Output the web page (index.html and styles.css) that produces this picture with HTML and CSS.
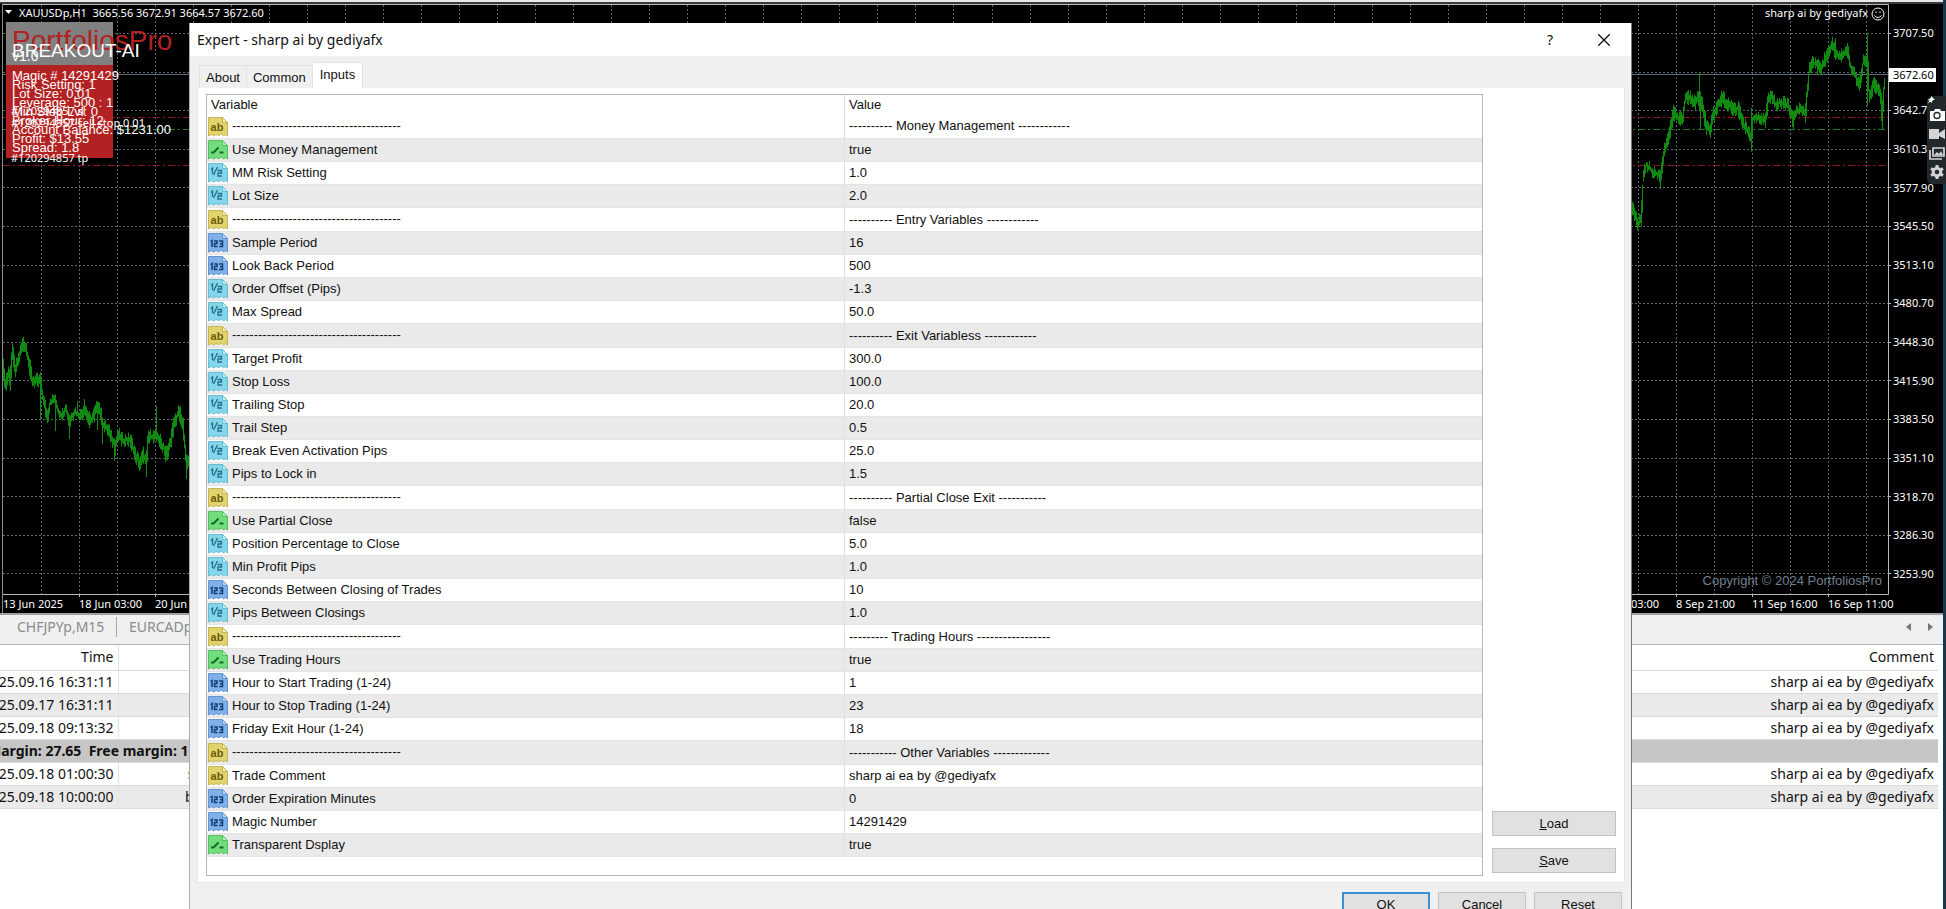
FILE: index.html
```
<!DOCTYPE html>
<html lang="en">

<head>
  <meta charset="UTF-8">
  <meta name="viewport" content="width=device-width, initial-scale=1.0">
  <title>XAUUSDp,H1</title>
  <link rel="stylesheet" href="styles.css">
</head>

<body>
  <!-- parameter type icons -->
  <svg class="defs" width="0" height="0" aria-hidden="true">
    <symbol id="str" viewBox="0 0 20 20">
      <path d="M0.500 0.500h14l5 5v13.500l-2-1.500-2 1.500-2-2-2.500 1.500-3-1-2.500 1.500-2-1.500-3 1.500z" fill="#e3d36c" stroke="#c4b557" />
      <path d="M14.500 0.500v5h5z" fill="#f6eeb0" stroke="#c4b557" />
      <text x="9" y="14" class="ico" fill="#6b5b0c" font-size="11">ab</text>
    </symbol>
    <symbol id="bool" viewBox="0 0 20 20">
      <path d="M0.500 0.500h14l5 5v13.500l-2-1.500-2 1.500-2-2-2.500 1.500-3-1-2.500 1.500-2-1.500-3 1.500z" fill="#72dd7c" stroke="#52bd63" />
      <path d="M14.500 0.500v5h5z" fill="#b9f3bd" stroke="#52bd63" />
      <path d="M3 12.500h2.500l5-5M11.500 12.500h4" fill="none" stroke="#14692c" stroke-width="2" />
    </symbol>
    <symbol id="dbl" viewBox="0 0 20 20">
      <path d="M0.500 0.500h14l5 5v13.500l-2-1.500-2 1.500-2-2-2.500 1.500-3-1-2.500 1.500-2-1.500-3 1.500z" fill="#84d7ea" stroke="#66bdd2" />
      <path d="M14.500 0.500v5h5z" fill="#c4f0f8" stroke="#66bdd2" />
      <path d="M3 6.500l1.500-1.500v6M9.500 4l-4 8M9.500 7.500h4v2.500l-3.500 0v3h4" fill="none" stroke="#226f8d" stroke-width="1.300" />
    </symbol>
    <symbol id="int" viewBox="0 0 20 20">
      <path d="M0.500 0.500h14l5 5v13.500l-2-1.500-2 1.500-2-2-2.500 1.500-3-1-2.500 1.500-2-1.500-3 1.500z" fill="#7fb0ea" stroke="#6594d2" />
      <path d="M14.500 0.500v5h5z" fill="#bcd9fa" stroke="#6594d2" />
      <path d="M2.500 8.500l1.500-1v6.500M6 8h3v2.500h-2.500v3h3M11 8h3.500v5.500h-3.500M12 10.700h2.500" fill="none" stroke="#123f78" stroke-width="1.500" />
    </symbol>
  </svg>

  <main class="terminal">
    <section class="chart">
      <svg id="plot" viewBox="0 0 1943 613" preserveAspectRatio="none" aria-hidden="true"></svg>

      <header class="chart-head">
        <span><svg class="caret" viewBox="0 0 7 4"><path d="M0 0h7l-3.500 4z" fill="#fff" /></svg>XAUUSDp,H1&nbsp; 3665.56 3672.91 3664.57 3672.60</span>
        <span>sharp ai by gediyafx
          <svg class="smile" viewBox="0 0 14 14" fill="none" stroke="#fff">
            <circle cx="7" cy="7" r="6" />
            <path d="M3.500 8.500q3.500 4 7 0M5 4.500v1.500M9 4.500v1.500" />
          </svg></span>
      </header>

      <div class="panel">
        <div class="panel-top"></div>
        <div class="panel-body"></div>
        <p class="brand">PortfoliosPro</p>
        <p class="product">BREAKOUT-AI</p>
        <p class="version">v1.0</p>
        <ul class="stats">
          <li>Magic # 14291429</li>
          <li>Risk Setting: 1</li>
          <li>Lot Size: 0.01</li>
          <li>Leverage: 500 : 1</li>
          <li>Min Stop Lvl: 0</li>
          <li>Broker Hour: 12</li>
          <li>Account Balance: $1231.00</li>
          <li>Profit: $13.55</li>
          <li>Spread: 1.8</li>
        </ul>
        <p class="order order-sl">#120294857 sl</p>
        <p class="order order-open">#120294857 sell stop 0.01</p>
        <p class="order order-tp">#120294857 tp</p>
      </div>

      <p class="copyright">Copyright © 2024 PortfoliosPro</p>

      <ul class="prices">
        <li>3707.50</li>
        <li></li>
        <li>3642.70</li>
        <li>3610.30</li>
        <li>3577.90</li>
        <li>3545.50</li>
        <li>3513.10</li>
        <li>3480.70</li>
        <li>3448.30</li>
        <li>3415.90</li>
        <li>3383.50</li>
        <li>3351.10</li>
        <li>3318.70</li>
        <li>3286.30</li>
        <li>3253.90</li>
      </ul>
      <span class="bid">3672.60</span>

      <div class="dates">
        <div><span>13 Jun 2025</span><span>18 Jun 03:00</span><span>20 Jun 08:00</span></div>
        <div><span>4 Sep 03:00</span><span>8 Sep 21:00</span><span>11 Sep 16:00</span><span>16 Sep 11:00</span></div>
      </div>
    </section>

    <nav class="chart-tabs">
      <a href="#">CHFJPYp,M15</a>
      <a href="#">EURCADp,M15</a>
      <span class="arrows">
        <button aria-label="Previous"><svg viewBox="0 0 5 8"><path d="M5 0v8l-5-4z" fill="#777" /></svg></button>
        <button aria-label="Next"><svg viewBox="0 0 5 8"><path d="M0 0v8l5-4z" fill="#777" /></svg></button>
      </span>
    </nav>

    <div class="trades-wrap">
      <table class="trades">
        <thead>
          <tr><th class="time">Time</th><th class="type"></th><th>Comment</th></tr>
        </thead>
        <tbody>
          <tr><td class="time">2025.09.16 16:31:11</td><td></td><td>sharp ai ea by @gediyafx</td></tr>
          <tr><td class="time">2025.09.17 16:31:11</td><td></td><td>sharp ai ea by @gediyafx</td></tr>
          <tr><td class="time">2025.09.18 09:13:32</td><td></td><td>sharp ai ea by @gediyafx</td></tr>
          <tr class="balance"><td colspan="3">Margin: 27.65&nbsp; Free margin: 1</td></tr>
          <tr><td class="time">2025.09.18 01:00:30</td><td>sell stop</td><td>sharp ai ea by @gediyafx</td></tr>
          <tr><td class="time">2025.09.18 10:00:00</td><td>buy stop</td><td>sharp ai ea by @gediyafx</td></tr>
        </tbody>
      </table>
    </div>
  </main>

  <aside class="recorder">
    <svg class="pin" viewBox="0 0 10 10"><path d="M5 0l5 5-2 0-2 2v2l-2-2-4 3 3-4-2-2h2l2-2z" fill="#fff" /></svg>
    <button aria-label="Screenshot"><svg viewBox="0 0 16 14"><path d="M1 3h4l1-2h5l1 2h4v10h-15z" fill="#fff" /><circle cx="8" cy="7.500" r="3" fill="none" stroke="#22272c" stroke-width="1.300" /></svg></button>
    <button aria-label="Record"><svg viewBox="0 0 16 14"><path d="M0 2h10v4l6-4v10l-6-3v3h-10z" fill="#d4d4d4" /></svg></button>
    <button aria-label="Gallery"><svg viewBox="0 0 16 14"><path d="M4 2h11v8h-11zM1 4v9h12" fill="none" stroke="#d4d4d4" stroke-width="1.700" /><path d="M5 9l3-3 2 2 2-3 2 4z" fill="#d4d4d4" /></svg></button>
    <button aria-label="Settings"><svg viewBox="0 0 16 14"><circle cx="8" cy="7" r="3.800" fill="none" stroke="#d4d4d4" stroke-width="3" /><path d="M8 0v3M8 11v3M2 3.500l2.500 1.500M11.500 9l2.500 1.500M2 10.500l2.500-1.500M11.500 5l2.500-1.500" stroke="#d4d4d4" stroke-width="3" /></svg></button>
  </aside>

  <div class="dialog" role="dialog" aria-labelledby="dialogTitle">
    <div class="titlebar">
      <span id="dialogTitle">Expert - sharp ai by gediyafx</span>
      <button class="help" aria-label="Help">?</button>
      <button class="close" aria-label="Close"><svg viewBox="0 0 12 12"><path d="M0 0l12 12M12 0l-12 12" stroke="#111" stroke-width="1.300" /></svg></button>
    </div>

    <div class="tabs">
      <button>About</button>
      <button>Common</button>
      <button class="active">Inputs</button>
    </div>

    <div class="page">
      <div class="list">
        <table class="inputs">
          <thead>
            <tr><th>Variable</th><th>Value</th></tr>
          </thead>
          <tbody>
            <tr class="section"><td><svg><use href="#str" /></svg>---------------------------------------</td><td>---------- Money Management ------------</td></tr>
            <tr><td><svg><use href="#bool" /></svg>Use Money Management</td><td>true</td></tr>
            <tr><td><svg><use href="#dbl" /></svg>MM Risk Setting</td><td>1.0</td></tr>
            <tr><td><svg><use href="#dbl" /></svg>Lot Size</td><td>2.0</td></tr>
            <tr class="section"><td><svg><use href="#str" /></svg>---------------------------------------</td><td>---------- Entry Variables ------------</td></tr>
            <tr><td><svg><use href="#int" /></svg>Sample Period</td><td>16</td></tr>
            <tr><td><svg><use href="#int" /></svg>Look Back Period</td><td>500</td></tr>
            <tr><td><svg><use href="#dbl" /></svg>Order Offset (Pips)</td><td>-1.3</td></tr>
            <tr><td><svg><use href="#dbl" /></svg>Max Spread</td><td>50.0</td></tr>
            <tr class="section"><td><svg><use href="#str" /></svg>---------------------------------------</td><td>---------- Exit Variabless ------------</td></tr>
            <tr><td><svg><use href="#dbl" /></svg>Target Profit</td><td>300.0</td></tr>
            <tr><td><svg><use href="#dbl" /></svg>Stop Loss</td><td>100.0</td></tr>
            <tr><td><svg><use href="#dbl" /></svg>Trailing Stop</td><td>20.0</td></tr>
            <tr><td><svg><use href="#dbl" /></svg>Trail Step</td><td>0.5</td></tr>
            <tr><td><svg><use href="#dbl" /></svg>Break Even Activation Pips</td><td>25.0</td></tr>
            <tr><td><svg><use href="#dbl" /></svg>Pips to Lock in</td><td>1.5</td></tr>
            <tr class="section"><td><svg><use href="#str" /></svg>---------------------------------------</td><td>---------- Partial Close Exit -----------</td></tr>
            <tr><td><svg><use href="#bool" /></svg>Use Partial Close</td><td>false</td></tr>
            <tr><td><svg><use href="#dbl" /></svg>Position Percentage to Close</td><td>5.0</td></tr>
            <tr><td><svg><use href="#dbl" /></svg>Min Profit Pips</td><td>1.0</td></tr>
            <tr><td><svg><use href="#int" /></svg>Seconds Between Closing of Trades</td><td>10</td></tr>
            <tr><td><svg><use href="#dbl" /></svg>Pips Between Closings</td><td>1.0</td></tr>
            <tr class="section"><td><svg><use href="#str" /></svg>---------------------------------------</td><td>--------- Trading Hours -----------------</td></tr>
            <tr><td><svg><use href="#bool" /></svg>Use Trading Hours</td><td>true</td></tr>
            <tr><td><svg><use href="#int" /></svg>Hour to Start Trading (1-24)</td><td>1</td></tr>
            <tr><td><svg><use href="#int" /></svg>Hour to Stop Trading (1-24)</td><td>23</td></tr>
            <tr><td><svg><use href="#int" /></svg>Friday Exit Hour (1-24)</td><td>18</td></tr>
            <tr class="section"><td><svg><use href="#str" /></svg>---------------------------------------</td><td>----------- Other Variables -------------</td></tr>
            <tr><td><svg><use href="#str" /></svg>Trade Comment</td><td>sharp ai ea by @gediyafx</td></tr>
            <tr><td><svg><use href="#int" /></svg>Order Expiration Minutes</td><td>0</td></tr>
            <tr><td><svg><use href="#int" /></svg>Magic Number</td><td>14291429</td></tr>
            <tr><td><svg><use href="#bool" /></svg>Transparent Dsplay</td><td>true</td></tr>
          </tbody>
        </table>
      </div>
      <div class="side">
        <button class="btn"><u>L</u>oad</button>
        <button class="btn"><u>S</u>ave</button>
      </div>
    </div>

    <div class="actions">
      <button class="btn default">OK</button>
      <button class="btn">Cancel</button>
      <button class="btn">Reset</button>
    </div>
  </div>

  <script src="chart.js"></script>
</body>

</html>
```

FILE: styles.css
```
* {
  box-sizing: border-box;
}

body {
  margin: 0;
  height: 100vh;
  overflow: hidden;
  position: relative;
  background-color: #fff;
  font-family: "Liberation Sans", Arial, sans-serif;
  font-size: 13px;
  color: #111;
}

p,
ul {
  margin: 0;
  padding: 0;
  list-style: none;
}

button {
  font: inherit;
  color: inherit;
  cursor: pointer;
}

.defs {
  position: absolute;
}

.ico {
  font-family: "Liberation Sans", Arial, sans-serif;
  font-weight: bold;
  text-anchor: middle;
}

/* main window */

.terminal {
  height: 100%;
  border-right: 3px solid #17384f;
}

.chart {
  position: relative;
  height: 615px;
  border-top: 2px solid #e8e8e8;
  border-bottom: 2px solid #a0a0a0;
  background-color: #000;
  color: #fff;
  font-family: "Noto Sans", Tahoma, sans-serif;
  font-size: 11px;
  line-height: 16px;
}

#plot {
  position: absolute;
  top: -2px;
  left: 0;
  width: 100%;
  height: 613px;
}

.chart-head {
  position: relative;
  display: flex;
  justify-content: space-between;
  padding: 3px 58px 0 5px;
}

.caret {
  width: 7px;
  height: 4px;
  margin-right: 7px;
  vertical-align: 3px;
}

.smile {
  width: 14px;
  height: 14px;
  vertical-align: -4px;
}

/* the expert's own labels, stacked over one another */

.panel {
  position: absolute;
  top: 20px;
  left: 6px;
  width: 107px;
  font-family: "Liberation Sans", Arial, sans-serif;
  white-space: nowrap;
}

.panel-top {
  height: 43px;
  background-color: #808080;
}

.panel-body {
  height: 93px;
  background-color: #b22222;
}

.brand,
.product,
.version,
.stats,
.order {
  position: absolute;
  left: 6px;
}

.brand {
  top: 3px;
  font-size: 28px;
  line-height: 32px;
  color: #b22222;
}

.product {
  top: 18px;
  font-size: 19px;
  line-height: 22px;
}

.version {
  top: 26px;
  font-size: 14px;
}

.stats {
  top: 49px;
  font-size: 13px;
  line-height: 9px;
}

.order {
  left: 5px;
  font-family: "Noto Sans", Tahoma, sans-serif;
  font-size: 11px;
}

.order-sl {
  top: 81px;
}

.order-open {
  top: 93px;
}

.order-tp {
  top: 128px;
}

.copyright {
  position: absolute;
  right: 61px;
  bottom: 24px;
  font-family: "Liberation Sans", Arial, sans-serif;
  font-size: 13px;
  color: #708090;
}

.prices {
  position: absolute;
  top: 23px;
  right: 0;
  bottom: 31px;
  width: 50px;
  display: flex;
  flex-direction: column;
  justify-content: space-between;
}

.prices li {
  height: 16px;
}

.bid {
  position: absolute;
  top: 66px;
  right: 7px;
  width: 47px;
  height: 14px;
  padding-left: 4px;
  line-height: 14px;
  background-color: #fff;
  color: #000;
}

.dates {
  position: absolute;
  left: 3px;
  right: 39px;
  bottom: 1px;
  display: flex;
  justify-content: space-between;
}

.dates div {
  display: flex;
}

.dates span {
  width: 76px;
  white-space: nowrap;
}

.chart-tabs {
  display: flex;
  align-items: center;
  height: 30px;
  padding-bottom: 5px;
  border-bottom: 1px solid #b4b4b4;
  background-color: #f0f0f0;
  font-family: "Noto Sans", "Segoe UI", sans-serif;
  font-size: 14px;
}

.chart-tabs a {
  width: 117px;
  padding-left: 17px;
  border-right: 1px solid #a8a8a8;
  line-height: 20px;
  color: #8a8a8a;
  text-decoration: none;
}

.chart-tabs a + a {
  padding-left: 12px;
  border: none;
}

.arrows {
  display: flex;
  gap: 17px;
  margin-left: auto;
  padding-right: 10px;
}

.arrows button {
  display: flex;
  padding: 0;
  border: none;
  background: none;
}

.arrows svg {
  width: 5px;
  height: 8px;
}

.trades-wrap {
  margin-right: 5px;
  overflow: hidden;
}

/* list is scrolled sideways by a few pixels */
.trades {
  width: calc(100% + 24px);
  margin-left: -24px;
  table-layout: fixed;
  border-collapse: collapse;
  font-family: "Noto Sans", "Segoe UI", sans-serif;
  font-size: 14px;
  white-space: nowrap;
}

.trades th,
.trades td {
  height: 23px;
  padding: 0 4px;
  border-bottom: 1px solid #d9d9d9;
  font-weight: normal;
  line-height: 22px;
  text-align: right;
}

.trades th {
  height: 25px;
}

.trades .time {
  width: 142px;
  border-right: 1px solid #e2e2e2;
}

.trades .type {
  width: 128px;
}

.trades tbody tr:nth-child(even) {
  background-color: #eaeaea;
}

.trades .balance td {
  padding: 0 12px;
  background-color: #c6c6c6;
  font-weight: bold;
  text-align: left;
}

/* screen recorder widget */

.recorder {
  position: absolute;
  top: 96px;
  right: 0;
  width: 19px;
  padding: 9px 0 3px 2px;
  border-radius: 5px 0 0 5px;
  background-color: #22272c;
}

.recorder button {
  display: flex;
  align-items: center;
  width: 17px;
  height: 19px;
  padding: 0;
  border: none;
  background: none;
}

.recorder button svg {
  width: 16px;
  height: 14px;
}

.pin {
  position: absolute;
  top: 0;
  left: 0;
  width: 8px;
  height: 8px;
}

/* expert properties dialog */

.dialog {
  position: absolute;
  top: 23px;
  left: 189px;
  right: 314px;
  border-right: 1px solid #777;
  border-left: 1px solid #aaa;
  background-color: #f0f0f0;
}

.titlebar {
  display: flex;
  align-items: center;
  height: 33px;
  padding-left: 7px;
  background-color: #fff;
  font-family: "Noto Sans", "Segoe UI", sans-serif;
  font-size: 14px;
  line-height: 32px;
}

.titlebar button {
  display: flex;
  align-items: center;
  justify-content: center;
  width: 54px;
  height: 32px;
  padding: 0;
  border: none;
  background: none;
}

.titlebar .help {
  margin-left: auto;
}

.titlebar svg {
  width: 12px;
  height: 12px;
}

.tabs {
  display: flex;
  align-items: flex-end;
  height: 32px;
  padding-left: 9px;
}

.tabs button {
  height: 23px;
  padding: 0 6px;
  border: 1px solid #e2e2e2;
  border-bottom: none;
  background-color: #f0f0f0;
}

.tabs button + button {
  border-left: none;
}

.tabs .active {
  height: 26px;
  padding: 0 7px 3px;
  background-color: #fff;
}

.page {
  display: flex;
  gap: 9px;
  margin: 0 6px 0 7px;
  padding: 6px 8px;
  border: 1px solid #e6e6e6;
  border-top: none;
  background-color: #fff;
}

.list {
  flex: 1;
  padding-bottom: 18px;
  border: 1px solid #b4b4b4;
}

.inputs {
  width: 100%;
  border-collapse: collapse;
  table-layout: fixed;
}

.inputs th,
.inputs td {
  height: 23px;
  padding: 0 4px;
  font-weight: normal;
  line-height: 20px;
  text-align: left;
  white-space: nowrap;
}

.inputs th {
  height: 19px;
  line-height: 19px;
}

.inputs td {
  padding-top: 1px;
  border-bottom: 1px solid #e4e4e4;
}

.inputs th:first-child,
.inputs td:first-child {
  border-right: 1px solid #e0e0e0;
}

.inputs td:first-child {
  padding-left: 1px;
}

.inputs .section td {
  height: 24px;
}

.inputs tbody tr:nth-child(even) {
  background-color: #eaeaea;
}

.inputs svg {
  width: 20px;
  height: 20px;
  margin-right: 4px;
  vertical-align: middle;
}

.side {
  display: flex;
  flex-direction: column;
  justify-content: flex-end;
  flex-shrink: 0;
  gap: 12px;
  width: 124px;
  padding-bottom: 3px;
}

.btn {
  height: 25px;
  padding: 0;
  border: 1px solid #c2c2c2;
  background-color: #e1e1e1;
}

.actions {
  display: flex;
  justify-content: flex-end;
  gap: 8px;
  padding: 9px 9px 10px;
}

.actions .btn {
  width: 88px;
}

.btn.default {
  border: 2px solid #3a8fd0;
}
```

FILE: chart.js
```
// price path, [x, y] of each turn
var left = [[3, 368], [5, 385], [8, 372], [10, 380], [12, 352], [15, 370], [18, 360], [23, 342], [26, 350], [29, 365], [32, 380], [40, 381], [42, 396], [47, 417], [50, 402], [54, 400], [58, 412], [62, 416], [65, 408], [69, 422], [74, 412], [80, 416], [84, 408], [90, 422], [95, 412], [98, 405], [103, 425], [107, 430], [110, 434], [115, 446], [118, 435], [122, 440], [130, 440], [135, 455], [139, 463], [143, 455], [146, 464], [148, 436], [155, 436], [158, 438], [162, 446], [167, 454], [171, 437], [174, 422], [179, 412], [183, 430], [186, 462], [189, 460]];
var right = [[1632, 208], [1638, 224], [1641, 216], [1643, 178], [1646, 165], [1653, 172], [1658, 174], [1660, 181], [1663, 155], [1666, 142], [1670, 130], [1673, 112], [1676, 118], [1682, 119], [1685, 99], [1690, 97], [1695, 102], [1699, 96], [1703, 110], [1706, 127], [1710, 130], [1713, 115], [1717, 106], [1722, 97], [1727, 105], [1732, 108], [1738, 109], [1742, 122], [1748, 132], [1751, 140], [1753, 118], [1765, 118], [1768, 100], [1771, 97], [1775, 105], [1780, 102], [1787, 104], [1792, 118], [1796, 110], [1805, 112], [1809, 68], [1812, 62], [1820, 68], [1827, 55], [1832, 45], [1836, 54], [1842, 56], [1847, 50], [1850, 66], [1855, 75], [1859, 86], [1863, 62], [1867, 57], [1869, 95], [1874, 84], [1880, 95], [1882, 115], [1884, 84], [1885, 76]];
// long wicks, [x, high, low]
var wicks = [[23, 338, 352], [12, 343, 360], [40, 380, 419], [55, 405, 431], [69, 415, 439], [77, 401, 415], [84, 399, 415], [97, 402, 430], [102, 425, 444], [114, 445, 461], [156, 406, 436], [165, 450, 462], [186, 455, 479], [1673, 105, 118], [1699, 72, 110], [1700, 100, 129], [1751, 108, 145], [1793, 115, 129], [1806, 105, 116], [1835, 38, 60], [1867, 33, 106], [1881, 105, 121], [1688, 90, 105]];

function noise(n) {
  var v = Math.sin(n * 12.9898) * 43758.5453;
  return v - Math.floor(v);
}

function bars(points) {
  var d = '';
  for (var i = 0; i < points.length - 1; i++) {
    var a = points[i], b = points[i + 1];
    for (var x = a[0]; x < b[0]; x++) {
      var y = a[1] + (b[1] - a[1]) * (x - a[0]) / (b[0] - a[0]);
      var step = Math.abs(b[1] - a[1]) / (b[0] - a[0]) / 2;
      var up = y - step - 1 - noise(x) * 7;
      var down = y + step + 1 + noise(x + 7) * 7;
      d += 'M' + (x + 0.5) + ' ' + up.toFixed(1) + 'V' + down.toFixed(1);
    }
  }
  return d;
}

function line(d, color, dash) {
  return '<path d="' + d + '" fill="none" stroke="' + color + '"' + (dash ? ' stroke-dasharray="' + dash + '"' : '') + '/>';
}

var grid = '', ticks = '';
for (var i = 0; i < 49; i++) {
  var gx = Math.round(41 + i * 38.02) + 0.5;
  grid += 'M' + gx + ' 5V594';
  if (i % 2) ticks += 'M' + gx + ' 594v3';
}
for (var j = 0; j < 15; j++) {
  var gy = Math.round(33 + j * 38.6) + 0.5;
  grid += 'M3 ' + gy + 'H1888';
  ticks += 'M1888 ' + gy + 'h3';
}

var wickPath = wicks.map(function (w) {
  return 'M' + (w[0] + 0.5) + ' ' + w[1] + 'V' + w[2];
}).join('');

document.getElementById('plot').innerHTML =
  line(grid, '#5c666e', '2 2') +
  line('M3 74.5H1888', '#5f6b76') +
  line('M3 117.5H1888M3 165.5H1888', '#8c1616', '7 3 2 3') +
  line('M3 129.5H1888', '#1d7a2c', '7 3 2 3') +
  line(bars(left) + bars(right) + wickPath, '#118a11') +
  line('M0 3H1943', '#777') +
  line('M2.5 4V613', '#8c8c8c') +
  line('M3 4.5H1888.5V594.5H3' + ticks, '#b8b8b8');
```
